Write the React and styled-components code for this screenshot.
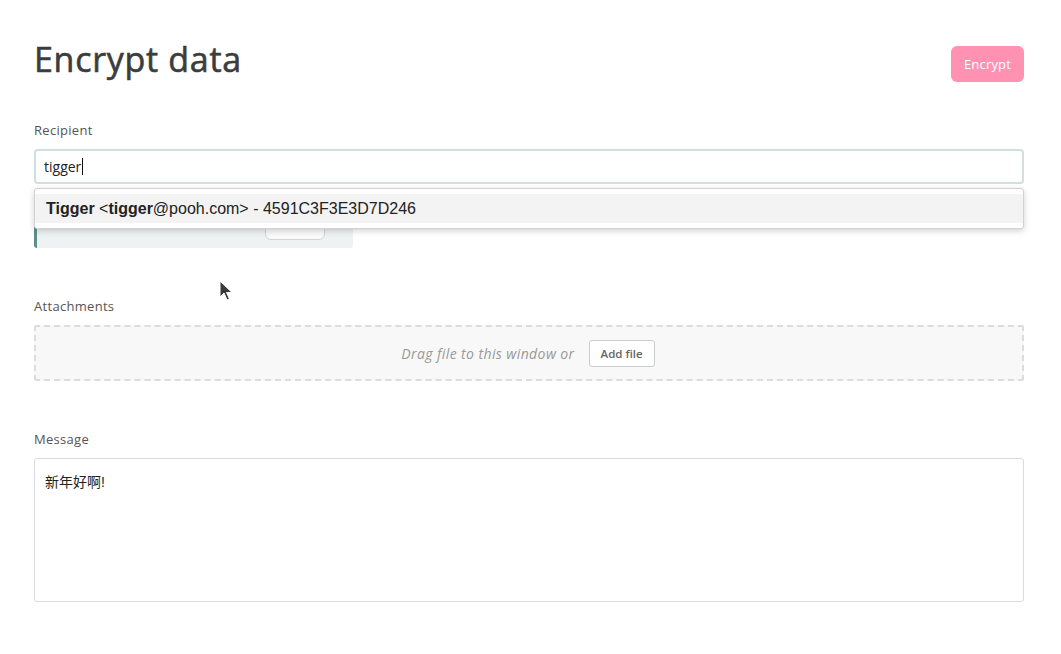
import React from 'react'
import styled, { createGlobalStyle } from 'styled-components'

const GlobalStyle = createGlobalStyle`
  html, body {
    margin: 0;
    padding: 0;
    background: #fff;
    font-family: "Open Sans", Lato, sans-serif;
  }
`

const Page = styled.div`
  position: relative;
  width: 1061px;
  height: 654px;
  box-sizing: border-box;
  padding: 36px 37px 0 34px;
  overflow: hidden;
`

const TopBar = styled.div`
  display: flex;
  justify-content: space-between;
  align-items: flex-start;
  margin-bottom: 40px;
`

const Title = styled.h1`
  margin: 0;
  font-size: 34px;
  font-weight: 400;
  letter-spacing: 0.7px;
  -webkit-text-stroke: 0.6px #3c3c3c;
  color: #3c3c3c;
  line-height: 46px;
`

const PrimaryButton = styled.button`
  margin-top: 10px;
  width: 73px;
  height: 36px;
  border: none;
  border-radius: 6px;
  background: #ff91b2;
  color: #fff;
  font-family: "Open Sans", sans-serif;
  font-size: 13px;
  font-weight: 400;
  letter-spacing: 0.2px;
`

const Field = styled.div`
  margin-bottom: ${p => p.gap}px;
`

const Label = styled.div`
  font-size: 13px;
  letter-spacing: 0.3px;
  color: #555;
  margin-bottom: 11px;
  line-height: 16px;
`

const AutoWrap = styled.div`
  position: relative;
`

const TextInput = styled.div`
  box-sizing: border-box;
  height: 35px;
  border: 2px solid #cfe0df;
  border-radius: 4px;
  padding: 0 8px;
  display: flex;
  align-items: center;
  font-size: 14px;
  color: #222;
  background: #fff;
`

const Caret = styled.span`
  display: inline-block;
  width: 1px;
  height: 17px;
  background: #111;
  margin-left: 1px;
`

const Notice = styled.div`
  margin-top: 16px;
  width: 319px;
  height: 48px;
  box-sizing: border-box;
  background: #eef2f2;
  border-left: 3px solid #5e8e8c;
  border-radius: 3px;
  display: flex;
  align-items: center;
  justify-content: flex-end;
  padding-right: 28px;
`

const GhostButton = styled.div`
  width: 60px;
  height: 26px;
  margin-top: 6px;
  border: 1px solid #d4d4d4;
  border-radius: 6px;
  background: #fafafa;
  box-sizing: border-box;
`

const Dropdown = styled.div`
  position: absolute;
  left: 0;
  right: 0;
  top: 39px;
  background: #fff;
  border: 1px solid #d2d2d2;
  border-radius: 3px;
  box-shadow: 0 2px 6px rgba(0, 0, 0, 0.18);
  padding: 5px 0;
`

const Option = styled.div`
  background: #f3f3f3;
  padding: 0 11px;
  height: 29px;
  display: flex;
  align-items: center;
  font-family: "Liberation Sans", Arial, sans-serif;
  font-size: 16px;
  color: #222;
  white-space: pre;
`

const DropZone = styled.div`
  box-sizing: border-box;
  height: 56px;
  border: 2px dashed #dcdcdc;
  border-radius: 2px;
  background: #f8f8f8;
  display: flex;
  align-items: center;
  justify-content: center;
  gap: 14px;
  padding-right: 2px;
`

const Hint = styled.span`
  font-style: italic;
  font-size: 14px;
  letter-spacing: 0.4px;
  color: #999;
`

const SmallButton = styled.button`
  height: 27px;
  padding: 0 11px;
  border: 1px solid #cdcdcd;
  border-radius: 3px;
  background: #fff;
  font-family: "Open Sans", sans-serif;
  font-size: 11.5px;
  font-weight: 600;
  color: #666;
`

const TextArea = styled.div`
  box-sizing: border-box;
  height: 144px;
  border: 1px solid #dcdcdc;
  border-radius: 3px;
  padding: 12px 10px;
  font-family: "Liberation Sans", "Noto Sans CJK SC", sans-serif;
  font-size: 14px;
  color: #222;
`

const Pointer = styled.svg`
  position: absolute;
  left: 219px;
  top: 280px;
`

export default function App() {
  return (
    <>
      <GlobalStyle />
      <Page>
        <TopBar>
          <Title>Encrypt data</Title>
          <PrimaryButton>Encrypt</PrimaryButton>
        </TopBar>

        <Field gap={50}>
          <Label>Recipient</Label>
          <AutoWrap>
            <TextInput>tigger<Caret /></TextInput>
            <Notice>
              <GhostButton />
            </Notice>
            <Dropdown>
              <Option>
                <b>Tigger</b> &lt;<b>tigger</b>@pooh.com&gt; - 4591C3F3E3D7D246
              </Option>
            </Dropdown>
          </AutoWrap>
        </Field>

        <Field gap={50}>
          <Label>Attachments</Label>
          <DropZone>
            <Hint>Drag file to this window or</Hint>
            <SmallButton>Add file</SmallButton>
          </DropZone>
        </Field>

        <Field gap={0}>
          <Label>Message</Label>
          <TextArea>新年好啊!</TextArea>
        </Field>

        <Pointer width="14" height="22" viewBox="0 0 14 22">
          <path d="M1 1 L1 17 L5 13 L8 20 L10.5 19 L7.5 12.5 L13 12.5 Z" fill="#3a3a3a" stroke="#fff" strokeWidth="1" />
        </Pointer>
      </Page>
    </>
  )
}
